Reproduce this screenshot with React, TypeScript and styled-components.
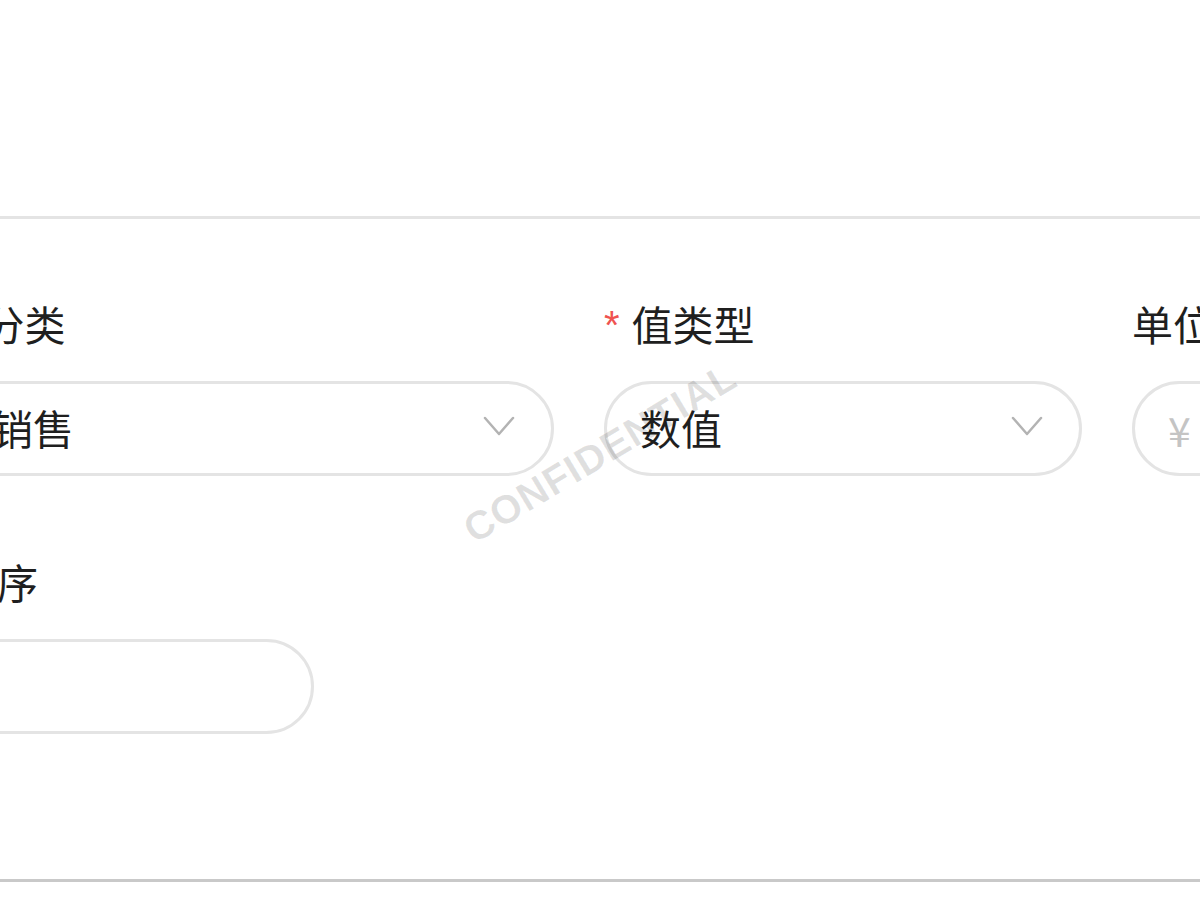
import styled, { createGlobalStyle } from 'styled-components';

const GlobalStyle = createGlobalStyle`
	html, body {
		margin: 0;
		padding: 0;
		background: #ffffff;
	}
	body {
		font-family: 'Noto Sans CJK SC', 'Noto Sans', sans-serif;
		color: #1f1f1f;
	}
`;

type FieldDef = {
	label: string;
	required?: boolean;
	kind: 'select' | 'input';
	value?: string;
	placeholder?: string;
	width?: number;
};

const FIELDS: FieldDef[] = [
	{ label: '分类', required: true, kind: 'select', value: '销售' },
	{ label: '值类型', required: true, kind: 'select', value: '数值' },
	{ label: '单位', kind: 'input', placeholder: '¥' },
	{ label: '排序', kind: 'input', width: 358 },
];

const Chevron = () => (
	<svg width="32" height="20" viewBox="0 0 32 20" fill="none">
		<polyline points="2,2 16,18 30,2" stroke="#b3b3b3" strokeWidth="2.5" strokeLinecap="round" strokeLinejoin="round" />
	</svg>
);

const App = () => {
	return (
		<Page>
			<GlobalStyle />
			<TopSpace />
			<Panel>
				<FormGrid>
					{FIELDS.map((f) => (
						<Field key={f.label} $width={f.width}>
							<Label>
								{f.required && <Required>*</Required>}
								{f.label}
							</Label>
							{f.kind === 'select' ? (
								<SelectBox>
									<span>{f.value}</span>
									<Chevron />
								</SelectBox>
							) : (
								<TextInput placeholder={f.placeholder} />
							)}
						</Field>
					))}
				</FormGrid>
			</Panel>
			<Watermark>CONFIDENTIAL</Watermark>
		</Page>
	);
};

export default App;

const Page = styled.div`
	position: relative;
	width: 1200px;
	height: 900px;
	overflow: hidden;
	background: #ffffff;
`;

const TopSpace = styled.div`
	height: 216px;
`;

const Panel = styled.section`
	border-top: 3px solid #e4e4e4;
	border-bottom: 3px solid #c9c9c9;
	padding: 76px 0 145px;
`;

const FormGrid = styled.div`
	display: grid;
	grid-template-columns: 598px 478px 478px;
	column-gap: 50px;
	row-gap: 77px;
	margin-left: -44px;
`;

const Field = styled.div<{ $width?: number }>`
	display: flex;
	flex-direction: column;
	gap: 30px;
	width: ${(p) => (p.$width ? `${p.$width}px` : 'auto')};
`;

const Label = styled.div`
	display: flex;
	align-items: center;
	height: 56px;
	font-size: 41px;
	line-height: 56px;
	color: #1f1f1f;
	white-space: nowrap;
`;

const Required = styled.span`
	font-family: 'Liberation Sans', Arial, sans-serif;
	color: #ef5350;
	font-size: 40px;
	margin-right: 12px;
	position: relative;
	top: 2px;
`;

const boxBase = `
	box-sizing: border-box;
	height: 95px;
	width: 100%;
	border: 3px solid #e4e4e4;
	border-radius: 48px;
	background: #ffffff;
	font-family: 'Noto Sans CJK SC', 'Noto Sans', sans-serif;
	font-size: 41px;
	color: #1f1f1f;
`;

const SelectBox = styled.div`
	${boxBase}
	display: flex;
	align-items: center;
	justify-content: space-between;
	padding: 0 36px 3px 33px;

	svg {
		margin-top: -2px;
	}
`;

const TextInput = styled.input`
	${boxBase}
	display: block;
	padding: 0 33px;
	outline: none;
	&::placeholder {
		color: #c4c4c4;
	}
`;

const Watermark = styled.div`
	position: absolute;
	left: 600px;
	top: 453px;
	transform: translate(-50%, -50%) rotate(-31deg);
	font-family: 'Liberation Sans', Arial, sans-serif;
	font-weight: 700;
	font-size: 40px;
	letter-spacing: 1px;
	color: rgba(0, 0, 0, 0.12);
	pointer-events: none;
	white-space: nowrap;
`;
